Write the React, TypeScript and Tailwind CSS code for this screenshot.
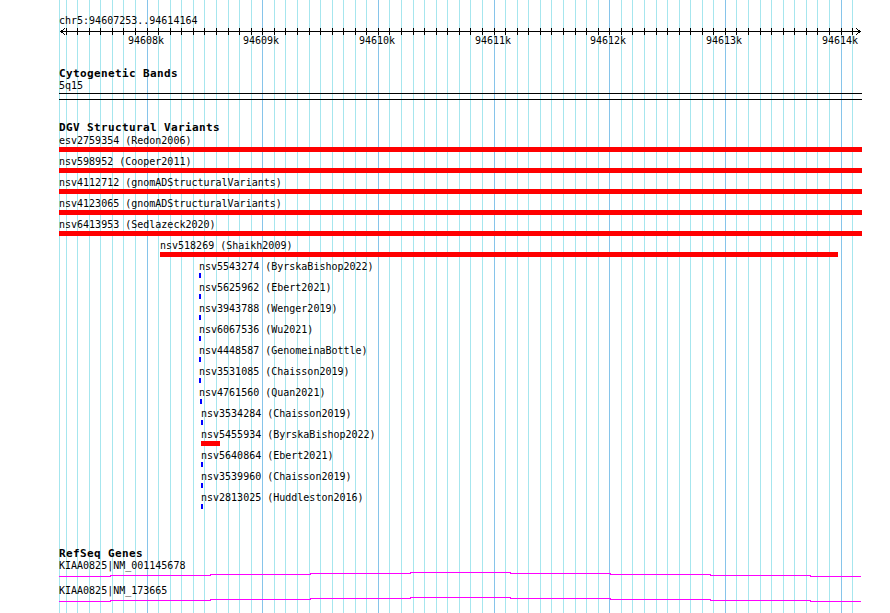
import React from 'react';

const STEP = 11.567;
const gridX = Array.from({ length: 69 }, (_, k) => ({
  x: Math.round(65.6 + STEP * k),
  major: (k - 7) % 10 === 0,
}));
const kbLabels = ['94608k', '94609k', '94610k', '94611k', '94612k', '94613k', '94614k'];

const tracks = [
  { label: 'esv2759354 (Redon2006)', lx: 'pl-0', bar: 'ml-0 w-[803px] bg-[#ff0000]' },
  { label: 'nsv598952 (Cooper2011)', lx: 'pl-0', bar: 'ml-0 w-[803px] bg-[#ff0000]' },
  { label: 'nsv4112712 (gnomADStructuralVariants)', lx: 'pl-0', bar: 'ml-0 w-[803px] bg-[#ff0000]' },
  { label: 'nsv4123065 (gnomADStructuralVariants)', lx: 'pl-0', bar: 'ml-0 w-[803px] bg-[#ff0000]' },
  { label: 'nsv6413953 (Sedlazeck2020)', lx: 'pl-0', bar: 'ml-0 w-[803px] bg-[#ff0000]' },
  { label: 'nsv518269 (Shaikh2009)', lx: 'pl-[101px]', bar: 'ml-[101px] w-[678px] bg-[#ff0000]' },
  { label: 'nsv5543274 (ByrskaBishop2022)', lx: 'pl-[140px]', bar: 'ml-[140px] w-[2px] bg-[#0000ff]' },
  { label: 'nsv5625962 (Ebert2021)', lx: 'pl-[140px]', bar: 'ml-[140px] w-[2px] bg-[#0000ff]' },
  { label: 'nsv3943788 (Wenger2019)', lx: 'pl-[140px]', bar: 'ml-[140px] w-[2px] bg-[#0000ff]' },
  { label: 'nsv6067536 (Wu2021)', lx: 'pl-[140px]', bar: 'ml-[140px] w-[2px] bg-[#0000ff]' },
  { label: 'nsv4448587 (GenomeinaBottle)', lx: 'pl-[140px]', bar: 'ml-[140px] w-[2px] bg-[#0000ff]' },
  { label: 'nsv3531085 (Chaisson2019)', lx: 'pl-[140px]', bar: 'ml-[140px] w-[2px] bg-[#0000ff]' },
  { label: 'nsv4761560 (Quan2021)', lx: 'pl-[140px]', bar: 'ml-[141px] w-[2px] bg-[#0000ff]' },
  { label: 'nsv3534284 (Chaisson2019)', lx: 'pl-[142px]', bar: 'ml-[142px] w-[2px] bg-[#0000ff]' },
  { label: 'nsv5455934 (ByrskaBishop2022)', lx: 'pl-[142px]', bar: 'ml-[142px] w-[19px] bg-[#ff0000]' },
  { label: 'nsv5640864 (Ebert2021)', lx: 'pl-[142px]', bar: 'ml-[142px] w-[2px] bg-[#0000ff]' },
  { label: 'nsv3539960 (Chaisson2019)', lx: 'pl-[142px]', bar: 'ml-[142px] w-[2px] bg-[#0000ff]' },
  { label: 'nsv2813025 (Huddleston2016)', lx: 'pl-[142px]', bar: 'ml-[142px] w-[2px] bg-[#0000ff]' },
];

// intron "hat": segment breaks (global x) and y offsets
const hatBreaks = [59, 110, 210, 310, 410, 510, 610, 710, 810, 861];
const hatY = [4, 3, 2, 1, 0, 1, 2, 3, 4];

const GeneLine = () => {
  const pts: string[] = [];
  hatY.forEach((y, i) => {
    pts.push(`${hatBreaks[i] - 59},${y + 0.5}`);
    pts.push(`${hatBreaks[i + 1] - 59},${y + 0.5}`);
  });
  return (
    <svg width={803} height={5} className="block" shapeRendering="crispEdges">
      <polyline points={pts.join(' ')} fill="none" stroke="#ff00ff" strokeWidth={1} />
    </svg>
  );
};

const Ruler = () => (
  <svg width={803} height={20} className="block" shapeRendering="crispEdges">
    <line x1={1} y1={4.5} x2={802} y2={4.5} stroke="#000" />
    <polyline points="6,1.5 1.5,4.5 6,7.5" fill="none" stroke="#000" />
    <polyline points="797,1.5 801.5,4.5 797,7.5" fill="none" stroke="#000" />
    {gridX.map((g) => (
      <line key={g.x} x1={g.x - 59 + 0.5} y1={1} x2={g.x - 59 + 0.5} y2={8} stroke="#000" />
    ))}
    {gridX
      .filter((g) => g.major)
      .map((g, i) => (
        <text
          key={g.x}
          x={g.x - 60}
          y={17}
          textAnchor="middle"
          fontFamily="'DejaVu Sans Mono', monospace"
          fontSize={10}
          fill="#000"
        >
          {kbLabels[i]}
        </text>
      ))}
  </svg>
);

const Title = ({ children, className = '' }: { children: React.ReactNode; className?: string }) => (
  <div className={`text-[11px] leading-[12px] font-bold tracking-[0.38px] ${className}`}>{children}</div>
);

export default function App() {
  return (
    <div className="relative w-[890px] h-[613px] overflow-hidden bg-white text-black font-['DejaVu_Sans_Mono',monospace]">
      {/* background grid */}
      <svg className="absolute inset-0" width={890} height={613} shapeRendering="crispEdges">
        <line x1={59.5} y1={0} x2={59.5} y2={613} stroke="#a6e6ee" />
        {gridX.map((g) => (
          <line
            key={g.x}
            x1={g.x + 0.5}
            y1={0}
            x2={g.x + 0.5}
            y2={613}
            stroke={g.major ? '#86c4ea' : '#a6e6ee'}
          />
        ))}
      </svg>

      <div className="relative pl-[59px] text-[10px] leading-[12px]">
        <div className="pt-[15px]">chr5:94607253..94614164</div>
        <Ruler />

        {/* Cytogenetic Bands */}
        <Title className="mt-[21px]">Cytogenetic Bands</Title>
        <div>5q15</div>
        <div className="mt-px w-[803px] h-px bg-black" />
        <div className="mt-[5px] w-[803px] h-px bg-black" />

        {/* DGV */}
        <Title className="mt-[22px]">DGV Structural Variants</Title>
        <div className="mt-px flex flex-col">
          {tracks.map((t) => (
            <div key={t.label} className="flex flex-col pb-[4px]">
              <div className={`h-[12px] whitespace-pre ${t.lx}`}>{t.label}</div>
              <div className={`h-[5px] ${t.bar}`} />
            </div>
          ))}
        </div>

        {/* RefSeq */}
        <Title className="mt-[35px]">RefSeq Genes</Title>
        <div>KIAA0825|NM_001145678</div>
        <GeneLine />
        <div className="mt-[8px]">KIAA0825|NM_173665</div>
        <GeneLine />
      </div>
    </div>
  );
}
